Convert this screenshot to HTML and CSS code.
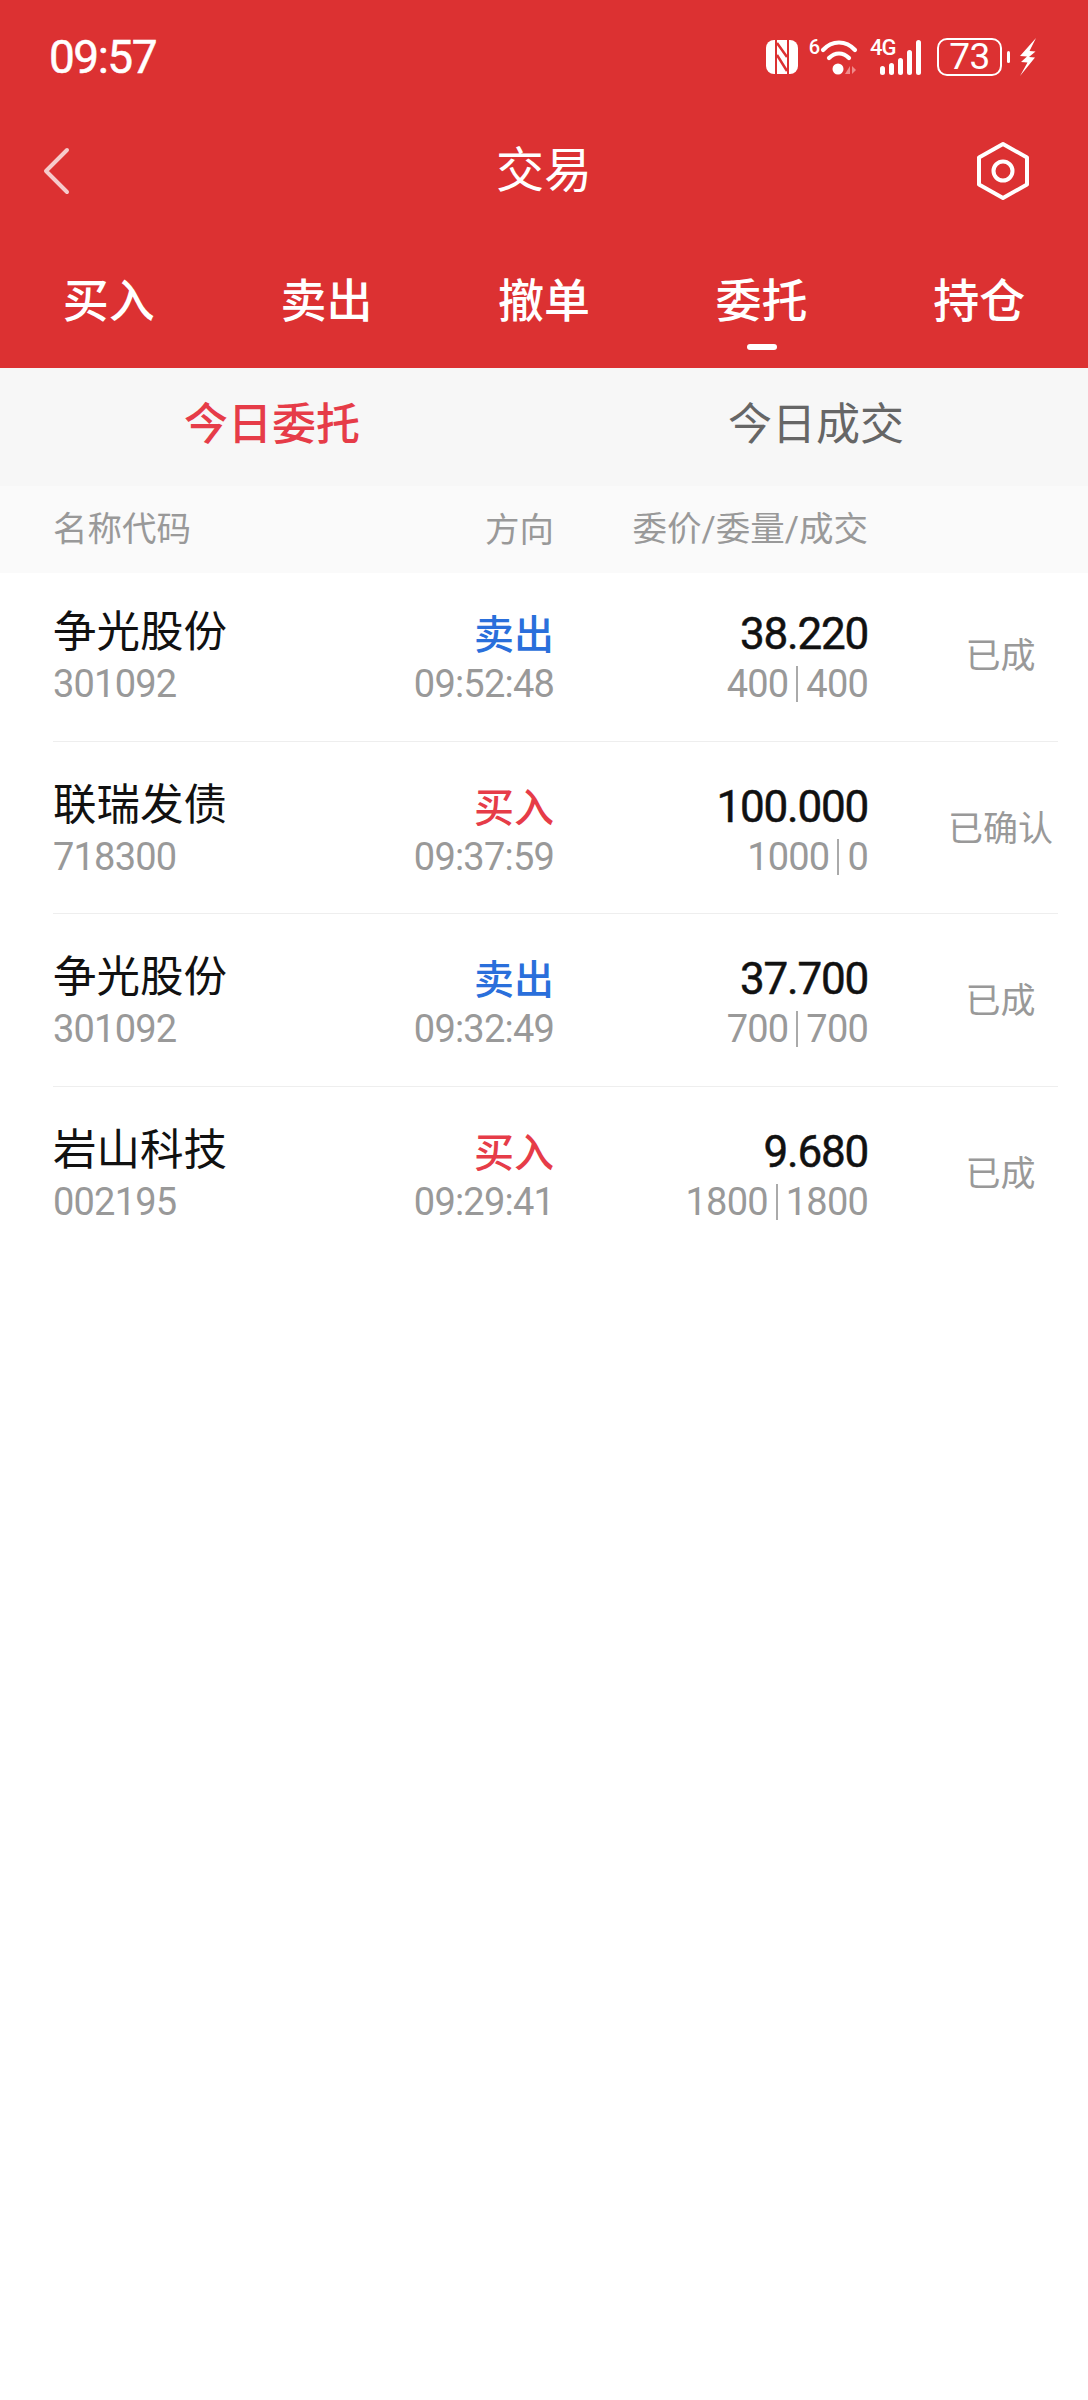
FILE: index.html
```html
<!DOCTYPE html>
<html lang="zh-CN">
  <head>
    <meta charset="UTF-8" />
    <title>交易</title>
    <link rel="stylesheet" href="styles.css">
  </head>
  <body>
    <div class="app">
      <header class="top">
        <div class="status-bar">
          <span class="clock">09:57</span>
          <div class="status-icons">
            <svg class="ic-nfc" width="32" height="34" viewBox="0 0 32 34">
              <path fill="#fff" d="M8 0h16a8 8 0 0 1 8 8v18a8 8 0 0 1-8 8H8a8 8 0 0 1-8-8V8a8 8 0 0 1 8-8z"/>
              <path fill="none" stroke="#dc3132" stroke-width="2" d="M10 0v34M22 0v34"/>
              <path fill="none" stroke="#dc3132" stroke-width="2.500" d="M11 3l10 14M11 15l10 16"/>
            </svg>
            <div class="wifi">
              <span class="wifi-six">6</span>
              <svg width="38" height="36" viewBox="0 0 38 36">
                <g fill="none" stroke="#fff" stroke-width="4.200" stroke-linecap="round">
                  <path d="M3 11C12 1 26 1 35 11"/>
                  <path d="M9 19c6-6 14-6 20 0"/>
                </g>
                <circle cx="18" cy="30" r="5.500" fill="#fff"/>
                <path fill="#ef8a8a" d="M30 27v8h-5zM32 27v8l4-4z"/>
              </svg>
            </div>
            <div class="signal">
              <span class="signal-label">4G</span>
              <div class="bars">
                <i class="bar b1"></i><i class="bar b2"></i><i class="bar b3"></i><i class="bar b4"></i><i class="bar b5"></i>
              </div>
            </div>
            <div class="battery">
              <span class="battery-body">73</span>
              <i class="battery-nub"></i>
            </div>
            <svg class="ic-bolt" width="17" height="38" viewBox="0 0 17 38">
              <path fill="#fff" d="M17 0L1 18l7 .5-6 5.500 6.500.5L1 38l15-18.500-6-.5 6.500-5.500-6-.5z"/>
            </svg>
          </div>
        </div>

        <div class="nav-bar">
          <svg class="ic-back" width="28" height="48" viewBox="0 0 28 48">
            <path fill="none" stroke="#fff" stroke-opacity="0.75" stroke-width="4" stroke-linecap="round" stroke-linejoin="round" d="M25 3L4 24l21 21"/>
          </svg>
          <h1 class="nav-title">交易</h1>
          <svg class="ic-gear" width="56" height="60" viewBox="0 0 56 60">
            <path fill="none" stroke="#fff" stroke-width="4" stroke-linejoin="round" d="M28 3l24 13.500v27L28 57 4 43.500v-27z"/>
            <circle cx="28" cy="30" r="9.500" fill="none" stroke="#fff" stroke-width="4"/>
          </svg>
        </div>

        <nav class="tabs">
          <div class="tab"><span>买入</span></div>
          <div class="tab"><span>卖出</span></div>
          <div class="tab"><span>撤单</span></div>
          <div class="tab tab-active"><span>委托</span><i class="tab-line"></i></div>
          <div class="tab"><span>持仓</span></div>
        </nav>
      </header>

      <div class="sub-tabs">
        <div class="sub-tab sub-tab-active">今日委托</div>
        <div class="sub-tab">今日成交</div>
      </div>

      <div class="table-head">
        <span class="col-name">名称代码</span>
        <span class="col-dir">方向</span>
        <span class="col-price">委价/委量/成交</span>
      </div>

      <div class="orders">
        <div class="order">
          <div class="col-name">
            <div class="main-text">争光股份</div>
            <div class="sub-text">301092</div>
          </div>
          <div class="col-dir">
            <div class="side side-sell">卖出</div>
            <div class="sub-text">09:52:48</div>
          </div>
          <div class="col-price">
            <div class="price">38.220</div>
            <div class="sub-text qty"><span>400</span><i class="qty-line"></i><span>400</span></div>
          </div>
          <div class="col-state">已成</div>
        </div>

        <div class="order">
          <div class="col-name">
            <div class="main-text">联瑞发债</div>
            <div class="sub-text">718300</div>
          </div>
          <div class="col-dir">
            <div class="side side-buy">买入</div>
            <div class="sub-text">09:37:59</div>
          </div>
          <div class="col-price">
            <div class="price">100.000</div>
            <div class="sub-text qty"><span>1000</span><i class="qty-line"></i><span>0</span></div>
          </div>
          <div class="col-state">已确认</div>
        </div>

        <div class="order">
          <div class="col-name">
            <div class="main-text">争光股份</div>
            <div class="sub-text">301092</div>
          </div>
          <div class="col-dir">
            <div class="side side-sell">卖出</div>
            <div class="sub-text">09:32:49</div>
          </div>
          <div class="col-price">
            <div class="price">37.700</div>
            <div class="sub-text qty"><span>700</span><i class="qty-line"></i><span>700</span></div>
          </div>
          <div class="col-state">已成</div>
        </div>

        <div class="order">
          <div class="col-name">
            <div class="main-text">岩山科技</div>
            <div class="sub-text">002195</div>
          </div>
          <div class="col-dir">
            <div class="side side-buy">买入</div>
            <div class="sub-text">09:29:41</div>
          </div>
          <div class="col-price">
            <div class="price">9.680</div>
            <div class="sub-text qty"><span>1800</span><i class="qty-line"></i><span>1800</span></div>
          </div>
          <div class="col-state">已成</div>
        </div>
      </div>
    </div>
  </body>
</html>
```

FILE: styles.css
```css
* {
  margin: 0;
  padding: 0;
  box-sizing: border-box;
}
body {
  font-family: Roboto, "Noto Sans CJK SC", sans-serif;
  background-color: #ffffff;
  color: #111111;
}
.app {
  width: 1088px;
  min-height: 2400px;
}
i {
  display: block;
}

/* red header */
.top {
  background-color: #dc3132;
  color: #ffffff;
  height: 368px;
}
.status-bar {
  height: 114px;
  display: flex;
  align-items: center;
  justify-content: space-between;
  padding: 0 52px 0 49px;
}
.clock {
  font-size: 46px;
  letter-spacing: -1.500px;
  -webkit-text-stroke: 0.500px #ffffff;
}
.status-icons {
  display: flex;
  align-items: center;
}
.ic-nfc {
  margin-right: 11px;
}
.wifi {
  display: flex;
  align-items: flex-start;
  height: 36px;
  margin-right: 12px;
}
.wifi-six {
  font-size: 20px;
  font-weight: 500;
  line-height: 20px;
  margin-top: -2px;
}
.signal {
  position: relative;
  width: 51px;
  height: 36px;
  margin-right: 16px;
}
.signal-label {
  position: absolute;
  left: 0;
  top: -1px;
  font-size: 22px;
  font-weight: 500;
  line-height: 20px;
  letter-spacing: -1px;
}
.bars {
  position: absolute;
  right: 0;
  bottom: 0;
  display: flex;
  align-items: flex-end;
  gap: 3.500px;
}
.bar {
  width: 5.500px;
  background-color: #ffffff;
  border-radius: 3px;
}
.b1 { height: 9px; }
.b2 { height: 12px; }
.b3 { height: 17px; }
.b4 { height: 25px; }
.b5 { height: 35px; }
.battery {
  display: flex;
  align-items: center;
  margin-right: 9px;
}
.battery-body {
  width: 65px;
  height: 38px;
  border: 2.500px solid #ffffff;
  border-radius: 10px;
  font-size: 37px;
  line-height: 33px;
  letter-spacing: -0.500px;
  text-align: center;
}
.battery-nub {
  width: 3px;
  height: 12px;
  margin-left: 5px;
  background-color: #ffffff;
  border-radius: 2px;
}
.nav-bar {
  height: 114px;
  display: grid;
  grid-template-columns: 1fr auto 1fr;
  align-items: center;
  padding: 0 42px;
}
.nav-title {
  font-size: 48px;
  font-weight: 400;
  line-height: 60px;
}
.ic-gear {
  justify-self: end;
  margin-right: 15px;
}
.tabs {
  display: flex;
}
.tab {
  flex: 1;
  display: flex;
  flex-direction: column;
  align-items: center;
  padding-top: 48px;
  font-size: 46px;
  font-weight: 500;
  line-height: 50px;
}
.tab-line {
  width: 30px;
  height: 6px;
  margin-top: 18px;
  border-radius: 3px;
  background-color: #ffffff;
}

/* today orders / deals */
.sub-tabs {
  display: flex;
  height: 118px;
  background-color: #f7f7f7;
}
.sub-tab {
  flex: 1;
  display: flex;
  align-items: center;
  justify-content: center;
  padding-bottom: 12px;
  font-size: 44px;
  color: #666666;
}
.sub-tab-active {
  color: #e63c48;
  font-weight: 500;
}
.table-head {
  display: grid;
  grid-template-columns: 300px 201px 314px;
  align-items: center;
  height: 87px;
  padding: 0 0 10px 53px;
  background-color: #fafafa;
  font-size: 34.500px;
  color: #999999;
}

/* order rows */
.orders {
  margin-top: -4px;
}
.order {
  display: grid;
  grid-template-columns: 300px 201px 314px 1fr;
  align-items: center;
  height: 172.500px;
  margin: 0 30px 0 53px;
  border-bottom: 1px solid #eeeeee;
}
.order:last-child {
  border-bottom: none;
}
.col-name {
  padding-top: 2px;
}
.col-name .sub-text {
  margin-top: 3px;
}
.col-dir,
.col-price {
  text-align: right;
}
.col-dir {
  padding-top: 5px;
}
.col-price {
  padding-top: 3px;
}
.col-price .sub-text {
  margin-top: 2px;
}
.main-text {
  font-size: 43.500px;
  line-height: 54px;
}
.sub-text {
  font-size: 38px;
  line-height: 42px;
  color: #999999;
  letter-spacing: -0.800px;
}
.side {
  font-size: 40px;
  font-weight: 500;
  line-height: 54px;
}
.side-sell {
  color: #2a6fdb;
}
.side-buy {
  color: #e63c48;
}
.price {
  font-size: 44px;
  line-height: 54px;
  letter-spacing: -1.200px;
  -webkit-text-stroke: 0.500px #111111;
}
.qty {
  display: flex;
  justify-content: flex-end;
  align-items: center;
}
.qty-line {
  width: 2px;
  height: 36px;
  margin: 0 8px;
  background-color: #aaaaaa;
}
.col-state {
  padding: 0 0 4px 75px;
  text-align: center;
  font-size: 35px;
  color: #999999;
  white-space: nowrap;
}
```
